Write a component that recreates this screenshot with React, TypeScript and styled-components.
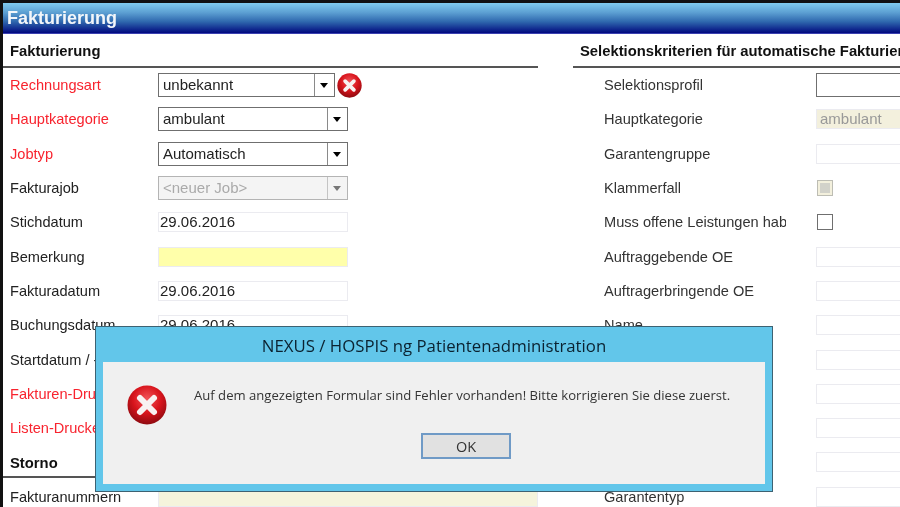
import React from 'react';
import styled, { createGlobalStyle } from 'styled-components';

const GlobalStyle = createGlobalStyle`
  html, body {
    margin: 0;
    padding: 0;
    height: 100%;
    overflow: hidden;
    background: #fff;
  }
`;

const ErrorIcon: React.FC<{ size: number; id: string }> = ({ size, id }) => (
  <svg width={size} height={size} viewBox="0 0 40 40">
    <defs>
      <radialGradient id={id} cx="50%" cy="35%" r="65%">
        <stop offset="0%" stopColor="#f2555a" />
        <stop offset="55%" stopColor="#d8141c" />
        <stop offset="100%" stopColor="#8e0a10" />
      </radialGradient>
    </defs>
    <circle cx="20" cy="20" r="19.5" fill={`url(#${id})`} />
    <path d="M13 13 L27 27 M27 13 L13 27" stroke="#f8f2f2" strokeWidth="6" strokeLinecap="round" />
  </svg>
);

const Combo: React.FC<{ text?: string; width: number; disabled?: boolean }> = ({ text, width, disabled }) => (
  <ComboBox $width={width} $disabled={disabled}>
    <ComboText $disabled={disabled}>{text}</ComboText>
    <ComboArrow $disabled={disabled} />
  </ComboBox>
);

type RowProps = { label?: string; required?: boolean; children?: React.ReactNode };

const LeftRow: React.FC<RowProps> = ({ label, required, children }) => (
  <Row>
    <LeftLabel $required={required}>{label}</LeftLabel>
    {children}
  </Row>
);

const RightRow: React.FC<RowProps> = ({ label, children }) => (
  <Row>
    <RightLabel>{label}</RightLabel>
    {children}
  </Row>
);

export default function App() {
  return (
    <Page>
      <GlobalStyle />
      <TitleBar>Fakturierung</TitleBar>
      <Columns>
        <LeftColumn>
          <SectionHead>Fakturierung</SectionHead>
          <LeftRow label="Rechnungsart" required>
            <Combo text="unbekannt" width={177} />
            <InlineError>
              <ErrorIcon size={25} id="fieldError" />
            </InlineError>
          </LeftRow>
          <LeftRow label="Hauptkategorie" required>
            <Combo text="ambulant" width={190} />
          </LeftRow>
          <LeftRow label="Jobtyp" required>
            <Combo text="Automatisch" width={190} />
          </LeftRow>
          <LeftRow label="Fakturajob">
            <Combo text="<neuer Job>" width={190} disabled />
          </LeftRow>
          <LeftRow label="Stichdatum">
            <Field $width={190}>29.06.2016</Field>
          </LeftRow>
          <LeftRow label="Bemerkung">
            <Field $width={190} $bg="#ffffaa" />
          </LeftRow>
          <LeftRow label="Fakturadatum">
            <Field $width={190}>29.06.2016</Field>
          </LeftRow>
          <LeftRow label="Buchungsdatum">
            <Field $width={190}>29.06.2016</Field>
          </LeftRow>
          <LeftRow label="Startdatum / -zeit" />
          <LeftRow label="Fakturen-Drucker" required />
          <LeftRow label="Listen-Drucker" required />
          <SectionHead $compact>Storno</SectionHead>
          <LeftRow label="Fakturanummern">
            <Field $width={380} $bg="#f5f4dc" />
          </LeftRow>
        </LeftColumn>
        <RightColumn>
          <SectionHead>Selektionskriterien für automatische Fakturierung</SectionHead>
          <RightRow label="Selektionsprofil">
            <Combo width={190} />
          </RightRow>
          <RightRow label="Hauptkategorie">
            <Field $width={190} $bg="#f3f0dd" $muted>ambulant</Field>
          </RightRow>
          <RightRow label="Garantengruppe">
            <Field $width={190} />
          </RightRow>
          <RightRow label="Klammerfall">
            <CheckBox $disabled>
              <CheckFill />
            </CheckBox>
          </RightRow>
          <RightRow label="Muss offene Leistungen haben">
            <CheckBox />
          </RightRow>
          <RightRow label="Auftraggebende OE">
            <Field $width={190} />
          </RightRow>
          <RightRow label="Auftragerbringende OE">
            <Field $width={190} />
          </RightRow>
          <RightRow label="Name">
            <Field $width={190} />
          </RightRow>
          <RightRow>
            <Field $width={190} />
          </RightRow>
          <RightRow>
            <Field $width={190} />
          </RightRow>
          <RightRow>
            <Field $width={190} />
          </RightRow>
          <RightRow>
            <Field $width={190} />
          </RightRow>
          <RightRow label="Garantentyp">
            <Field $width={190} />
          </RightRow>
        </RightColumn>
      </Columns>
      <Dialog>
        <DialogTitle>NEXUS / HOSPIS ng Patientenadministration</DialogTitle>
        <DialogBody>
          <DialogMessage>
            <ErrorIcon size={40} id="dialogError" />
            <MessageText>Auf dem angezeigten Formular sind Fehler vorhanden! Bitte korrigieren Sie diese zuerst.</MessageText>
          </DialogMessage>
          <OkButton>OK</OkButton>
        </DialogBody>
      </Dialog>
    </Page>
  );
}

const Page = styled.div`
  position: relative;
  width: 900px;
  height: 507px;
  overflow: hidden;
  box-sizing: border-box;
  background: #fff;
  border-top: 3px solid #111;
  border-left: 3px solid #111;
  font-family: 'Liberation Sans', Arial, sans-serif;
  font-size: 14.6px;
  color: #222;
  filter: blur(0.35px);
`;

const TitleBar = styled.div`
  height: 31px;
  margin-left: -1px;
  padding: 0 5px;
  line-height: 31px;
  font-size: 18px;
  font-weight: bold;
  color: #f2f6fa;
  background: linear-gradient(#80cbee 0%, #5c9fd2 32%, #2f68ae 62%, #00087e 100%);
  border-bottom: 1px solid #3a3fb0;
  box-sizing: border-box;
`;

const Columns = styled.div`
  display: flex;
  gap: 35px;
`;

const LeftColumn = styled.div`
  flex: none;
  width: 535px;
`;

const RightColumn = styled.div`
  flex: none;
  width: 340px;
`;

const SectionHead = styled.div<{ $compact?: boolean }>`
  height: ${p => (p.$compact ? '27px' : '32px')};
  margin-top: ${p => (p.$compact ? '4px' : '0')};
  margin-bottom: ${p => (p.$compact ? '1.3px' : '0')};
  line-height: ${p => (p.$compact ? '29px' : '35px')};
  padding-left: 7px;
  font-size: 14.8px;
  font-weight: bold;
  color: #111;
  white-space: nowrap;
  overflow: hidden;
  border-bottom: 2px solid #555;
`;

const Row = styled.div`
  display: flex;
  align-items: center;
  height: 34.3px;
`;

const LeftLabel = styled.div<{ $required?: boolean }>`
  flex: none;
  width: 148px;
  padding-left: 7px;
  box-sizing: border-box;
  margin-right: 7px;
  white-space: nowrap;
  overflow: hidden;
  color: ${p => (p.$required ? '#f8232e' : '#222')};
`;

const RightLabel = styled.div`
  flex: none;
  width: 182px;
  margin: 0 30px 0 31px;
  white-space: nowrap;
  overflow: hidden;
  color: #333;
`;

const ComboBox = styled.div<{ $width: number; $disabled?: boolean }>`
  flex: none;
  display: flex;
  width: ${p => p.$width}px;
  height: 24px;
  box-sizing: border-box;
  font-size: 15px;
  border: 1px solid ${p => (p.$disabled ? '#b4b4b4' : '#6f6f6f')};
  background: ${p => (p.$disabled ? '#f4f4f4' : '#fff')};
`;

const ComboText = styled.div<{ $disabled?: boolean }>`
  flex: 1;
  padding-left: 4px;
  line-height: 22px;
  color: ${p => (p.$disabled ? '#aaa' : '#222')};
`;

const ComboArrow = styled.div<{ $disabled?: boolean }>`
  flex: none;
  width: 19px;
  position: relative;
  border-left: 1px solid ${p => (p.$disabled ? '#c4c4c4' : '#8a8a8a')};
  &::after {
    content: '';
    position: absolute;
    left: 5px;
    top: 9px;
    border-top: 5px solid ${p => (p.$disabled ? '#777' : '#000')};
    border-left: 4px solid transparent;
    border-right: 4px solid transparent;
  }
`;

const InlineError = styled.div`
  flex: none;
  display: flex;
  margin-left: 2px;
`;

const Field = styled.div<{ $width: number; $bg?: string; $muted?: boolean }>`
  flex: none;
  width: ${p => p.$width}px;
  height: 20px;
  box-sizing: border-box;
  padding-left: ${p => (p.$muted ? '3px' : '1px')};
  line-height: 18px;
  font-size: 15px;
  border: 1px solid #ebebf0;
  background: ${p => p.$bg ?? '#fff'};
  color: ${p => (p.$muted ? '#999' : '#222')};
`;

const CheckBox = styled.div<{ $disabled?: boolean }>`
  flex: none;
  display: flex;
  align-items: center;
  justify-content: center;
  width: 16px;
  height: 16px;
  margin-left: 1px;
  box-sizing: border-box;
  border: 1px solid ${p => (p.$disabled ? '#bdbdb4' : '#6f6f6f')};
  background: ${p => (p.$disabled ? '#f3f0dd' : '#fff')};
`;

const CheckFill = styled.div`
  width: 10px;
  height: 10px;
  background: #d2d2ca;
`;

const Dialog = styled.div`
  position: absolute;
  left: 92px;
  top: 323px;
  width: 678px;
  height: 166px;
  box-sizing: border-box;
  display: flex;
  flex-direction: column;
  padding: 0 7px 7px 7px;
  background: #62c6ea;
  border: 1px solid #3d6272;
`;

const DialogTitle = styled.div`
  flex: none;
  height: 35px;
  line-height: 37px;
  text-align: center;
  font-family: 'Open Sans', 'Noto Sans', sans-serif;
  font-size: 16.8px;
  color: #0b2230;
`;

const DialogBody = styled.div`
  flex: 1;
  display: flex;
  flex-direction: column;
  background: #f0f0f0;
`;

const DialogMessage = styled.div`
  display: flex;
  align-items: flex-start;
  height: 71px;
  padding: 23px 0 0 24px;
  box-sizing: border-box;
`;

const MessageText = styled.div`
  margin: 1px 0 0 27px;
  font-family: 'Open Sans', 'Noto Sans', sans-serif;
  font-size: 13.1px;
  color: #333;
  white-space: nowrap;
`;

const OkButton = styled.div`
  align-self: flex-start;
  width: 90px;
  height: 26px;
  margin-left: 318px;
  box-sizing: border-box;
  line-height: 23px;
  text-align: center;
  font-family: 'Open Sans', 'Noto Sans', sans-serif;
  font-size: 14.5px;
  color: #333;
  background: #e1e1e1;
  border: 2px solid #6f9ac6;
`;
